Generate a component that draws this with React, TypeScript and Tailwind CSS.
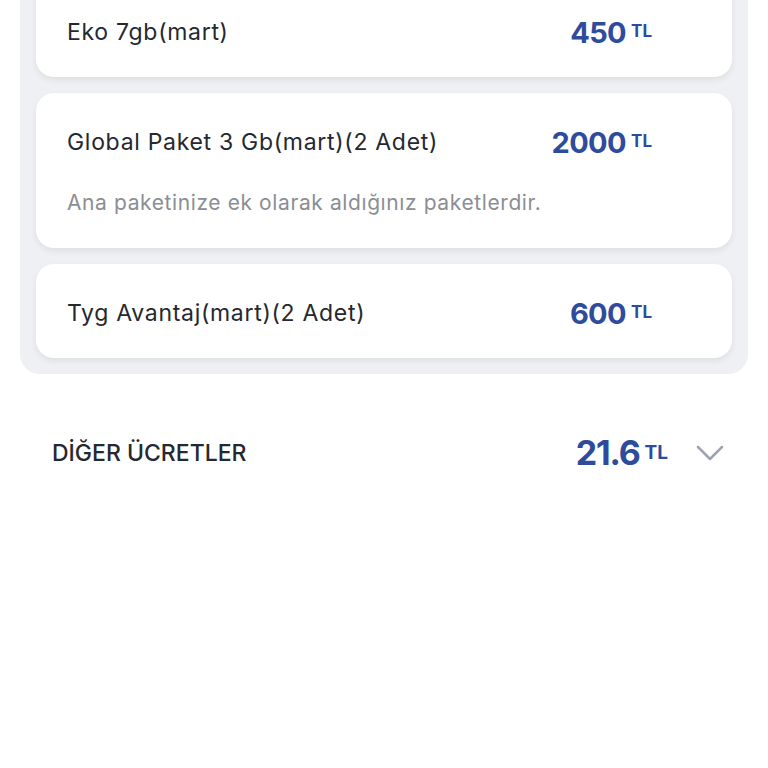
import React from "react";

const font = { fontFamily: 'Inter, "Open Sans", sans-serif' };

function Price({ value, big }: { value: string; big?: boolean }) {
  return (
    <div className="flex items-center gap-[5px] text-[#2f4b9c]">
      <span className={big ? "text-[34px] font-bold tracking-[-1.2px] leading-none" : "text-[29px] font-bold tracking-[-0.6px] leading-none"}>
        {value}
      </span>
      <span className={big ? "text-[19px] font-bold leading-none -mt-[1px]" : "text-[17px] font-bold leading-none -mt-[1px]"}>TL</span>
    </div>
  );
}

function Card({ title, price, note }: { title: string; price: string; note?: string }) {
  return (
    <div className="bg-white rounded-[18px] shadow-[0_3px_6px_rgba(0,0,0,0.07)] pl-[31px] pr-[80px] pt-[34px] pb-[30px]">
      <div className="flex items-center justify-between h-[30px]">
        <span className="text-[23px] text-[#25282f] tracking-[0.7px]">{title}</span>
        <Price value={price} />
      </div>
      {note && (
        <div className="mt-[31px] h-[30px] flex items-center text-[21px] text-[#8b8e94] tracking-[0.6px]">{note}</div>
      )}
    </div>
  );
}

export default function App() {
  return (
    <div className="w-[768px] h-[768px] bg-white overflow-hidden" style={font}>
      <div className="mx-[20px] -mt-[17px] bg-[#eef0f3] rounded-b-[20px] px-[16px] pb-[16px] flex flex-col gap-[16px]">
        <Card title="Eko 7gb(mart)" price="450" />
        <Card title="Global Paket 3 Gb(mart)(2 Adet)" price="2000" note="Ana paketinize ek olarak aldığınız paketlerdir." />
        <Card title="Tyg Avantaj(mart)(2 Adet)" price="600" />
      </div>
      <div className="flex items-center justify-between pl-[52px] pr-[44px] mt-[61px] h-[36px]">
        <span className="text-[23px] font-medium text-[#25282f] tracking-[0px]">DİĞER ÜCRETLER</span>
        <div className="flex items-center gap-[28px]">
          <Price value="21.6" big />
          <svg width="28" height="18" viewBox="0 0 28 18" fill="none">
            <path d="M2 3 L14 15 L26 3" stroke="#9ea3b1" strokeWidth="2.5" strokeLinecap="round" strokeLinejoin="round" />
          </svg>
        </div>
      </div>
    </div>
  );
}
